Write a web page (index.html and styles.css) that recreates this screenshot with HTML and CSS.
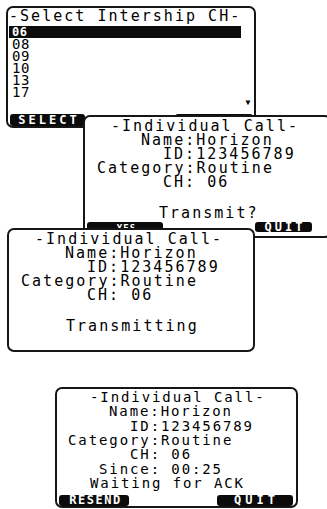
FILE: index.html
```html
<!DOCTYPE html>
<html lang="en">
<head>
<meta charset="utf-8">
<title>Individual Call screens</title>
<link rel="stylesheet" href="styles.css">
</head>
<body>
<main class="canvas">
  <section class="lcd s1">
    <div class="line title1">-Select Intership CH-</div>
    <div class="body1">
      <ul class="list">
        <li class="item sel">06</li>
        <li class="item">08</li>
        <li class="item">09</li>
        <li class="item">10</li>
        <li class="item">13</li>
        <li class="item">17</li>
      </ul>
      <div class="scroll"><span class="arrow">&#9660;</span></div>
    </div>
    <div class="keys keys1">
      <span class="key k-select">SELECT</span>
      <span class="key k-blank"></span>
    </div>
  </section>

  <section class="lcd s2">
    <div class="line c-title">-Individual Call-</div>
    <div class="line c-name">Name:Horizon</div>
    <div class="line c-id">ID:123456789</div>
    <div class="line c-cat">Category:Routine</div>
    <div class="line c-ch">CH: 06</div>
    <div class="line msg msg2">Transmit?</div>
    <div class="keys keys2">
      <span class="key k-yes">YES</span>
      <span class="key k-quit2">QUIT</span>
    </div>
  </section>

  <section class="lcd s3">
    <div class="line c-title">-Individual Call-</div>
    <div class="line c-name">Name:Horizon</div>
    <div class="line c-id">ID:123456789</div>
    <div class="line c-cat">Category:Routine</div>
    <div class="line c-ch">CH: 06</div>
    <div class="line msg msg3">Transmitting</div>
  </section>

  <section class="lcd s4">
    <div class="line d-title">-Individual Call-</div>
    <div class="line d-name">Name:Horizon</div>
    <div class="line d-id">ID:123456789</div>
    <div class="line d-cat">Category:Routine</div>
    <div class="line d-ch">CH: 06</div>
    <div class="line d-since">Since: 00:25</div>
    <div class="line d-wait">Waiting for ACK</div>
    <div class="keys keys4">
      <span class="key k-resend">RESEND</span>
      <span class="key k-quit4">QUIT</span>
    </div>
  </section>
</main>
</body>
</html>
```

FILE: styles.css
```css
html, body {
  margin: 0;
  padding: 0;
  background: #ffffff;
}

.canvas {
  position: relative;
  width: 327px;
  height: 509px;
  overflow: hidden;
  background: #ffffff;
}

.lcd {
  position: absolute;
  box-sizing: border-box;
  display: flex;
  flex-direction: column;
  border: 2px solid #161616;
  border-radius: 7px;
  background: #ffffff;
  color: #000000;
  font-family: "DejaVu Sans Mono", monospace;
  font-size: 15px;
  letter-spacing: 2.03px;
  line-height: 14px;
}

.line {
  height: 14px;
  white-space: pre;
}

/* screen 1 : channel list */
.s1 {
  left: 6px;
  top: 6px;
  width: 250px;
  height: 122px;
  padding-top: 1px;
  z-index: 1;
}

.title1 {
  margin-left: 1px;
}

.body1 {
  display: flex;
  height: 82px;
  margin-top: 3px;
}

.list {
  list-style: none;
  margin: 0 0 0 1px;
  padding: 0;
  width: 232px;
  font-size: 14px;
  letter-spacing: 0.5px;
  line-height: 12px;
}

.item {
  height: 12px;
  padding-left: 3px;
  white-space: pre;
}

.item.sel {
  background: #0c0c0c;
  color: #ffffff;
  font-weight: bold;
  font-size: 12px;
}

.scroll {
  flex: 1;
  display: flex;
  align-items: flex-end;
  justify-content: center;
}

.arrow {
  font-size: 8px;
  line-height: 8px;
  letter-spacing: 0;
  margin-bottom: 1px;
  margin-left: 1px;
}

.keys {
  display: flex;
  justify-content: space-between;
}

.keys1 {
  margin-top: 6px;
  padding: 0 1px 0 2px;
}

.key {
  display: block;
  box-sizing: border-box;
  height: 12px;
  background: #0b0b0b;
  color: #ffffff;
  border-radius: 3px;
  font-family: "DejaVu Sans Mono", monospace;
  font-weight: bold;
  font-size: 12px;
  line-height: 12px;
  letter-spacing: 3px;
  text-align: center;
  padding-left: 3px;
  white-space: pre;
}

.k-select {
  width: 75px;
}

.k-blank {
  width: 78px;
}

/* screens 2 & 3 : individual call */
.s2 {
  left: 83px;
  top: 115px;
  width: 249px;
  height: 123px;
  padding-top: 2px;
  z-index: 2;
}

.s3 {
  left: 7px;
  top: 228px;
  width: 248px;
  height: 124px;
  padding-top: 2px;
  z-index: 3;
}

.c-title { margin-left: 26px; }
.c-name  { margin-left: 56px; }
.c-id    { margin-left: 78px; }
.c-cat   { margin-left: 12px; }
.c-ch    { margin-left: 78px; }

.msg {
  margin-top: 17px;
}

.msg2 { margin-left: 74px; }
.msg3 { margin-left: 57px; }

.keys2 {
  margin-top: auto;
  margin-bottom: 2px;
  padding-left: 2px;
}

.k-yes {
  width: 76px;
  font-size: 9px;
  letter-spacing: 1px;
}

.k-quit2 {
  width: 57px;
  margin-right: 18px;
  height: 10px;
  line-height: 11px;
}

/* screen 4 : waiting for ack */
.s4 {
  left: 55px;
  top: 387px;
  width: 243px;
  height: 121px;
  padding-top: 1px;
  font-size: 14px;
  letter-spacing: 1.9px;
  line-height: 14.33px;
  z-index: 4;
}

.s4 .line {
  height: 14.33px;
}

.d-title { margin-left: 33px; }
.d-name  { margin-left: 52px; }
.d-id    { margin-left: 73px; }
.d-cat   { margin-left: 11px; }
.d-ch    { margin-left: 73px; }
.d-since { margin-left: 42px; }
.d-wait  { margin-left: 33px; }

.keys4 {
  margin-top: auto;
  padding: 0 3px 0 2px;
}

.k-resend {
  width: 70px;
  height: 11px;
  line-height: 11px;
  letter-spacing: 1.5px;
}

.k-quit4 {
  width: 76px;
  height: 11px;
  line-height: 11px;
  letter-spacing: 4px;
}
```
